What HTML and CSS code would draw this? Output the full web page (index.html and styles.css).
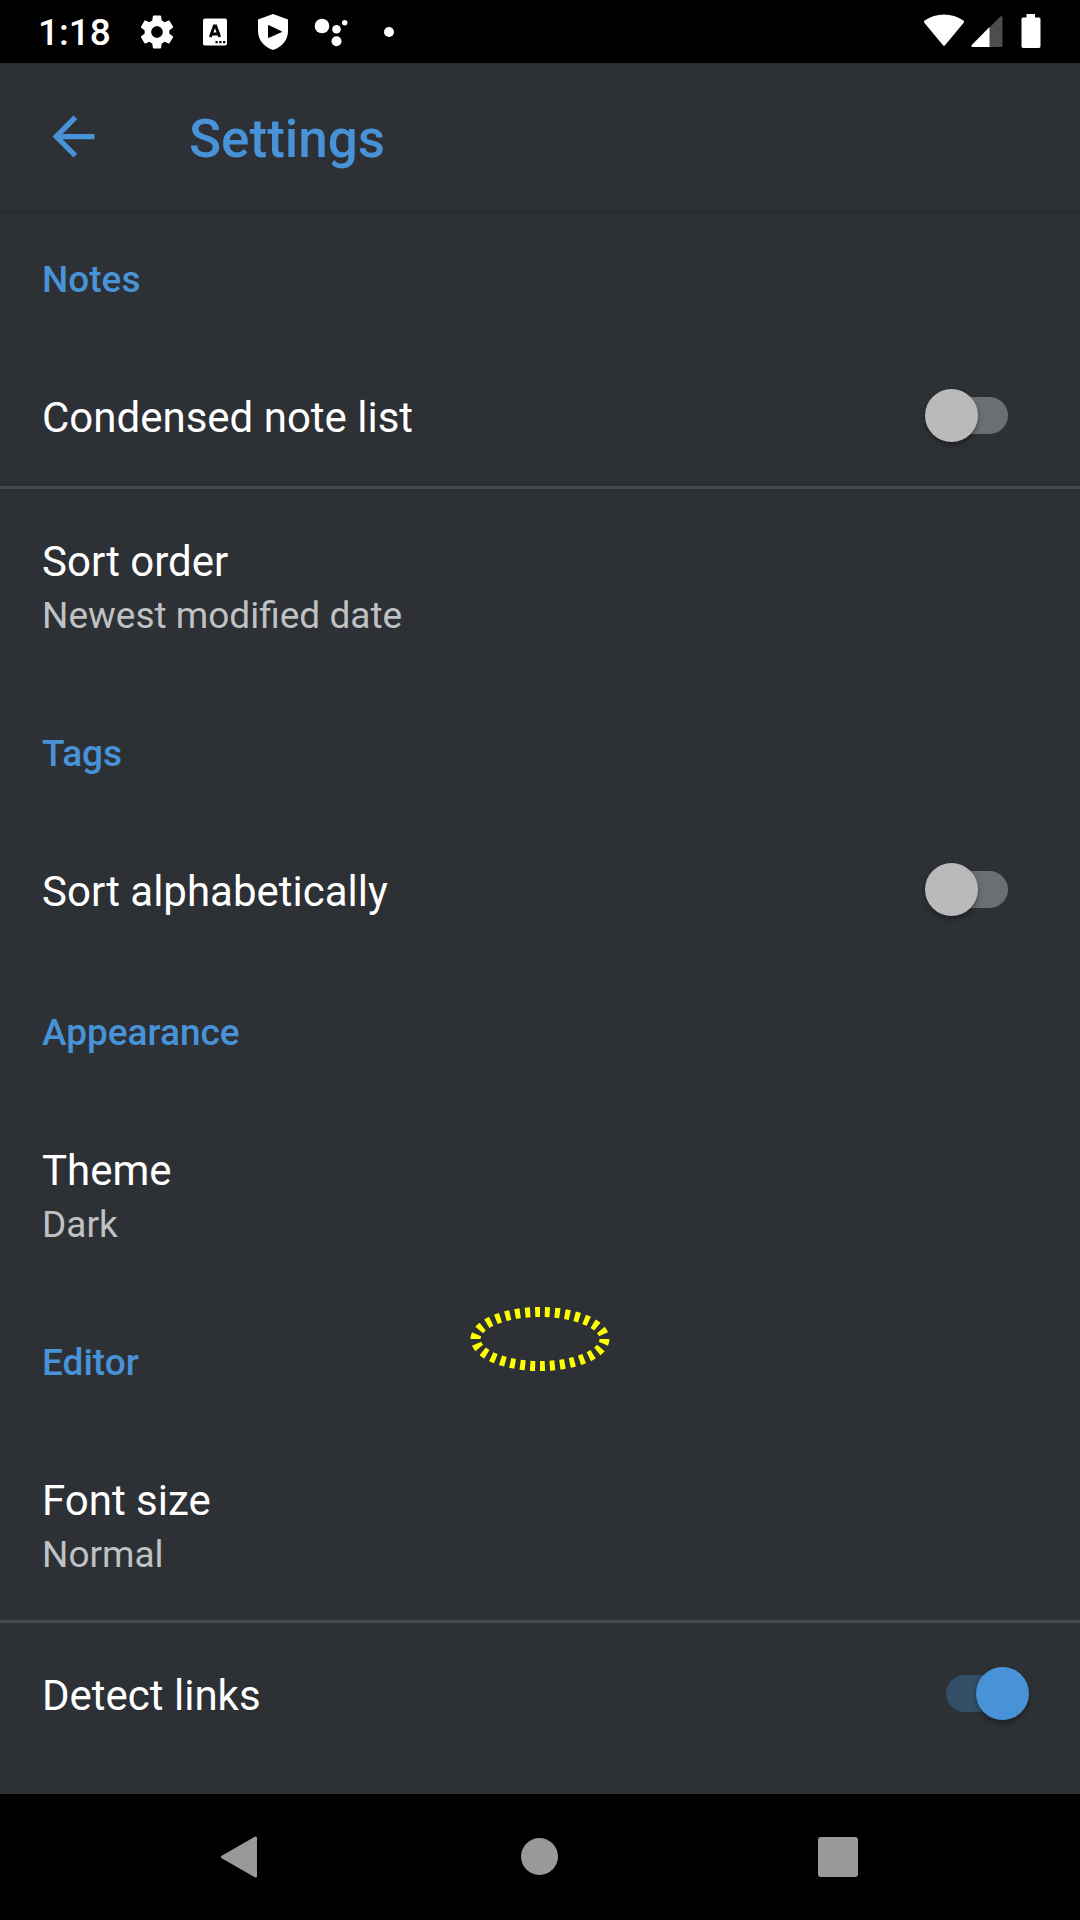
FILE: index.html
```html
<!DOCTYPE html>
<html lang="en">
<head>
<meta charset="utf-8">
<meta name="viewport" content="width=device-width, initial-scale=1">
<title>Settings</title>
<link rel="stylesheet" href="styles.css">
</head>
<body class="screen">
  <div class="status-bar">
    <div class="status-left">
      <time class="clock">1:18</time>
      <svg class="status-icon" viewBox="0 0 36 36" aria-hidden="true"><path fill="#fff" transform="translate(-1.8 -1.8) scale(1.65)" d="M19.43 12.98c.04-.32.07-.64.07-.98s-.03-.66-.07-.98l2.11-1.65c.19-.15.24-.42.12-.64l-2-3.46c-.12-.22-.39-.3-.61-.22l-2.49 1c-.52-.4-1.08-.73-1.69-.98l-.38-2.65C14.46 2.18 14.25 2 14 2h-4c-.25 0-.46.18-.49.42l-.38 2.65c-.61.25-1.17.59-1.69.98l-2.49-1c-.23-.09-.49 0-.61.22l-2 3.46c-.13.22-.07.49.12.64l2.11 1.65c-.04.32-.07.65-.07.98s.03.66.07.98l-2.11 1.65c-.19.15-.24.42-.12.64l2 3.46c.12.22.39.3.61.22l2.49-1c.52.4 1.08.73 1.69.98l.38 2.65c.03.24.24.42.49.42h4c.25 0 .46-.18.49-.42l.38-2.65c.61-.25 1.17-.59 1.69-.98l2.49 1c.23.09.49 0 .61-.22l2-3.46c.12-.22.07-.49-.12-.64l-2.11-1.65zM12 15.5c-1.93 0-3.5-1.57-3.5-3.5s1.57-3.5 3.5-3.5 3.5 1.57 3.5 3.5-1.57 3.500-3.500 3.500z"/></svg>
      <svg class="status-icon" viewBox="0 0 36 36" aria-hidden="true"><rect x="6" y="4.500" width="24" height="27" rx="2" fill="#fff"/><path d="M13.300 23 17.300 12h1.400L22.700 23M14.800 20h6.400" fill="none" stroke="#000" stroke-width="2.800"/><path d="M18.500 27h2.200v2.200h-2.200zM22.300 27h2.200v2.200h-2.200zM26.100 27h2.200v2.200h-2.200z"/></svg>
      <svg class="status-icon" viewBox="0 0 36 36" aria-hidden="true"><path d="M18 0 33 5.500V17c0 9-6 16-15 19C9 33 3 26 3 17V5.500z" fill="#fff"/><path d="M13.500 11.500v12L26.500 17.700z" stroke="#000" stroke-linejoin="round"/></svg>
      <svg class="status-icon" viewBox="0 0 36 36" aria-hidden="true"><g fill="#fff"><circle cx="9" cy="12" r="7.300"/><circle cx="23.500" cy="15.200" r="4.300"/><circle cx="31.700" cy="8.700" r="2.700"/><circle cx="23.500" cy="27.300" r="5"/></g></svg>
      <span class="more-dot"></span>
    </div>
    <div class="status-right">
      <svg class="wifi" viewBox="0 0 42 34" aria-hidden="true"><path d="M1.500 6.500C13-1.500 29-1.500 40.500 6.500q1 1 .2 2.200L22 31.200q-1 1-2 0L1.300 8.700Q.500 7.500 1.500 6.500z" fill="#fff"/></svg>
      <svg class="signal" viewBox="0 0 32 34" aria-hidden="true"><path d="M18 14 29.500 2.500Q31.500 1 31.500 3.500v28q0 1.500-1.500 1.500H18z" fill="#4d4d4d"/><path d="M18.500 13v20H1.500q-2-.5-.5-2.200z" fill="#fff"/></svg>
      <svg class="battery" viewBox="0 0 20 34" aria-hidden="true"><path d="M5.500 0h8.500v3.500h4q1.500 0 1.500 1.500v27q0 2-1.500 2H2Q.500 34 .500 32V5Q.500 3.500 2 3.500h3.500z" fill="#fff"/></svg>
    </div>
  </div>

  <header class="app-bar">
    <button class="back" type="button" aria-label="Back">
      <svg class="back-icon" viewBox="0 0 24 24"><path fill="currentColor" d="M20 11H7.830l5.590-5.590L12 4l-8 8 8 8 1.410-1.410L7.830 13H20v-2z"/></svg>
    </button>
    <h1 class="title">Settings</h1>
  </header>

  <main class="settings">
    <h2 class="category">Notes</h2>
    <div class="row divided">
      <label class="name" for="condensed">Condensed note list</label>
      <input class="switch" type="checkbox" role="switch" id="condensed">
    </div>
    <button class="row" type="button">
      <span class="labels"><span class="name">Sort order</span><span class="summary">Newest modified date</span></span>
    </button>

    <h2 class="category">Tags</h2>
    <div class="row">
      <label class="name" for="alphabetical">Sort alphabetically</label>
      <input class="switch" type="checkbox" role="switch" id="alphabetical">
    </div>

    <h2 class="category">Appearance</h2>
    <button class="row" type="button">
      <span class="labels"><span class="name">Theme</span><span class="summary">Dark</span></span>
    </button>

    <h2 class="category">Editor</h2>
    <button class="row divided" type="button">
      <span class="labels"><span class="name">Font size</span><span class="summary">Normal</span></span>
    </button>
    <div class="row">
      <label class="name" for="links">Detect links</label>
      <input class="switch" type="checkbox" role="switch" id="links" checked>
    </div>

    <svg class="marker" viewBox="0 0 140 64" aria-hidden="true"><ellipse cx="70" cy="32" rx="64.500" ry="27" pathLength="300" fill="none" stroke="#ff0" stroke-width="10" stroke-dasharray="5 5"/></svg>
  </main>

  <nav class="nav-bar">
    <button class="nav-button" type="button" aria-label="Back"><svg class="nav-icon" viewBox="0 0 42 42"><path d="M34.500 2v38L1.500 21z" fill="#999" stroke="#999" stroke-width="3" stroke-linejoin="round"/></svg></button>
    <button class="nav-button" type="button" aria-label="Home"><svg class="nav-icon" viewBox="0 0 42 42"><circle cx="20.500" cy="20.500" r="18.500" fill="#999"/></svg></button>
    <button class="nav-button" type="button" aria-label="Overview"><svg class="nav-icon" viewBox="0 0 42 42"><rect x="1" y="1" width="40" height="40" rx="3" fill="#999"/></svg></button>
  </nav>
</body>
</html>
```
FILE: styles.css
```css
* {
  box-sizing: border-box;
}

.screen {
  margin: 0;
  min-height: 100vh;
  display: flex;
  flex-direction: column;
  background: #2d3035;
  color: #fff;
  font-family: Roboto, "Noto Sans", sans-serif;
}

button {
  border: 0;
  margin: 0;
  padding: 0;
  background: none;
  color: inherit;
  font: inherit;
  text-align: left;
}

svg {
  display: block;
  overflow: visible;
}

.status-bar {
  display: flex;
  justify-content: space-between;
  height: 63px;
  padding: 0 39px 0 38px;
  background: #000;
}

.status-left {
  display: flex;
  align-items: center;
  gap: 22px;
}

.clock {
  width: 79px;
  font-size: 37px;
  line-height: 44px;
  font-weight: 500;
  padding-top: 3px;
}

.status-icon {
  width: 36px;
  height: 36px;
}

.more-dot {
  width: 10px;
  height: 10px;
  margin-left: 13px;
  border-radius: 50%;
  background: #fff;
}

.status-right {
  display: flex;
  gap: 6px;
  padding-top: 14px;
}

.wifi {
  width: 42px;
  height: 34px;
}

.signal {
  width: 32px;
  height: 34px;
}

.battery {
  width: 20px;
  height: 34px;
  margin-left: 12px;
}

.app-bar {
  display: flex;
  align-items: center;
  gap: 84px;
  height: 147px;
  padding: 0 42px;
  color: #4892d7;
  box-shadow: 0 1px 4px rgba(0, 0, 0, 0.2);
}

.back-icon {
  width: 63px;
  height: 63px;
}

.title {
  margin: 0;
  padding-top: 4px;
  font-size: 53px;
  line-height: 62px;
  font-weight: 500;
}

.settings {
  position: relative;
  flex: 1;
}

.category {
  margin: 0;
  padding: 48px 42px 44px;
  color: #4892d7;
  font-size: 37px;
  line-height: 43px;
  font-weight: 500;
}

.row {
  display: flex;
  justify-content: space-between;
  align-items: flex-start;
  width: 100%;
  padding: 45px 51px 40px 42px;
  border-bottom: 3px solid transparent;
}

.divided {
  border-bottom-color: #47494d;
}

.labels {
  display: flex;
  flex-direction: column;
}

.name {
  font-size: 42px;
  line-height: 56px;
}

.summary {
  color: #c0c1c2;
  font-size: 37px;
  line-height: 51px;
}

.switch {
  appearance: none;
  display: grid;
  align-items: center;
  width: 104px;
  height: 53px;
  margin: -1px 0 0;
}

.switch::before,
.switch::after {
  content: "";
  grid-area: 1 / 1;
}

.switch::before {
  justify-self: center;
  width: 62px;
  height: 37px;
  border-radius: 19px;
  background: #6b6f72;
}

.switch::after {
  width: 53px;
  height: 53px;
  border-radius: 50%;
  background: #bababa;
  box-shadow: 0 3px 5px rgba(0, 0, 0, 0.35);
}

.switch:checked::before {
  background: #344e67;
}

.switch:checked::after {
  justify-self: end;
  background: #4892d7;
}

.marker {
  position: absolute;
  top: 1097px;
  left: 50%;
  width: 140px;
  height: 64px;
  margin-left: -70px;
}

.nav-bar {
  display: flex;
  justify-content: center;
  gap: 88px;
  height: 126px;
  background: #000;
}

.nav-button {
  display: grid;
  place-items: center;
  width: 210px;
}

.nav-icon {
  width: 42px;
  height: 42px;
}
```
